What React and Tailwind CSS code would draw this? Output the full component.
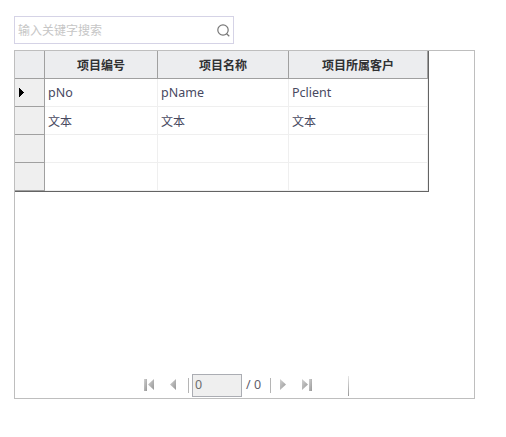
import React from "react";

const columns = [
  { title: "项目编号", cells: ["pNo", "文本", "", ""], width: "w-[113px]" },
  { title: "项目名称", cells: ["pName", "文本", "", ""], width: "w-[131px]" },
  { title: "项目所属客户", cells: ["Pclient", "文本", "", ""], width: "w-[139px]" },
];

function SearchBox() {
  return (
    <div className="flex h-7 w-[220px] items-center justify-between border border-[#d5d3e6] bg-white pl-[3px] pr-[3px]">
      <span className="pt-0.5 text-[12px] leading-none text-[#c6c6c6]">输入关键字搜索</span>
      <svg width="13" height="13" viewBox="0 0 13 13" fill="none" stroke="#777" strokeWidth="1.2">
        <circle cx="6" cy="6" r="5.2" />
        <path d="M9.6 9.8 L12.3 12.3" />
      </svg>
    </div>
  );
}

function RowHeaders() {
  return (
    <div className="w-[30px]">
      <div className="h-7 border-b border-r border-[#a0a0a0] bg-[#ecedef]" />
      {[0, 1, 2, 3].map((row) => (
        <div key={row} className="flex h-7 items-center border-b border-r border-[#a0a0a0] bg-[#efefef] pl-1">
          {row === 0 && (
            <svg width="5" height="9" viewBox="0 0 5 9" shapeRendering="crispEdges">
              <path d="M0 0 L5 4.5 L0 9 Z" fill="#000" />
            </svg>
          )}
        </div>
      ))}
    </div>
  );
}

function Column({ title, cells, width }) {
  return (
    <div className={width}>
      <div className="flex h-7 items-center justify-center border-b border-r border-[#a0a0a0] bg-[#ecedef] pt-0.5 text-[12px] font-bold leading-none text-[#303133]">
        {title}
      </div>
      {cells.map((cell, i) => (
        <div
          key={i}
          className={
            "flex h-7 items-center border-b border-r border-[#efefef] pl-[3px] leading-none text-[#48495f] " +
            (i === 0 ? "pt-px text-[12.5px]" : "pt-0.5 text-[12px]")
          }
        >
          {cell}
        </div>
      ))}
    </div>
  );
}

function Arrow({ kind, className }) {
  const left = kind === "first" || kind === "prev";
  const bar = kind === "first" || kind === "last";
  return (
    <svg className={className} width="12" height="12" viewBox="0 0 12 12">
      <defs>
        <linearGradient id={"g-" + kind} x1="0" y1="0" x2="1" y2="1">
          <stop offset="0" stopColor="#d2d2d2" />
          <stop offset="1" stopColor="#979797" />
        </linearGradient>
      </defs>
      <g fill={"url(#g-" + kind + ")"}>
        <path d={left ? "M10 0 L4 5.5 L10 11 Z" : "M0 0 L6 5.5 L0 11 Z"} />
        {bar && <rect x={left ? 0 : 7} y="0" width="3" height="12" />}
      </g>
    </svg>
  );
}

function Pager() {
  return (
    <div className="mb-px flex h-6 items-center pl-[129px] text-[12.5px] leading-none text-[#5f606c]">
      <Arrow kind="first" />
      <Arrow kind="prev" className="ml-[10px]" />
      <div className="ml-[10px] h-[15px] w-px bg-[#b5b5b5]" />
      <div className="ml-[3px] flex h-[23px] w-[50px] items-center border border-[#abadb3] bg-[#efefef] pl-0.5 text-[#6d6d6d]">0</div>
      <span className="ml-1 w-6">/ 0</span>
      <div className="h-[15px] w-px bg-[#b5b5b5]" />
      <Arrow kind="next" className="ml-[9px]" />
      <Arrow kind="last" className="ml-[10px]" />
      <div className="ml-[34px] mt-0.5 h-5 w-px bg-linear-to-b from-[#e6e6e6] to-[#999]" />
    </div>
  );
}

export default function App() {
  return (
    <main className="h-[437px] w-[506px] bg-white pl-[14px] pt-4 font-['Noto_Sans','Noto_Sans_CJK_SC',sans-serif]">
      <SearchBox />
      <section className="mt-1.5 flex h-[349px] w-[461px] flex-col justify-between border border-[#bebebe]">
        <div className="flex h-[141px] w-[414px] border-b border-r border-[#646464]">
          <RowHeaders />
          {columns.map((column) => (
            <Column key={column.title} {...column} />
          ))}
        </div>
        <Pager />
      </section>
    </main>
  );
}
